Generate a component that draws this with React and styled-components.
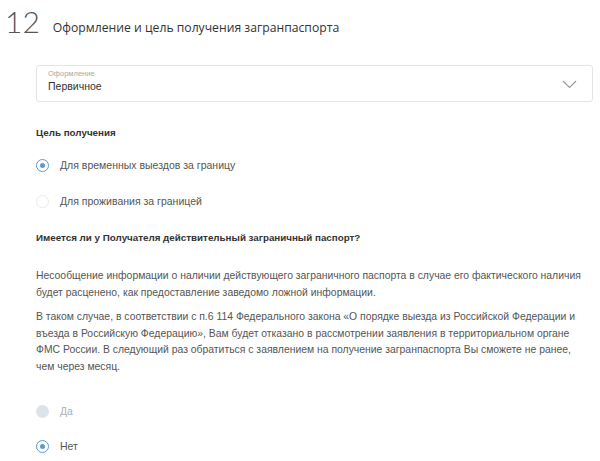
import React, { useState } from 'react';
import styled, { createGlobalStyle } from 'styled-components';

const GlobalStyle = createGlobalStyle`
  body {
    margin: 0;
    background: #fff;
    font-family: "Liberation Sans", Arial, sans-serif;
    color: #333;
  }
`;

const Page = styled.div`
  width: 600px;
  padding: 6px 7px 0 0;
  box-sizing: border-box;
`;

const Header = styled.div`
  display: flex;
  align-items: flex-start;
  gap: 13px;
  padding-left: 5px;
`;

const StepNumber = styled.div`
  font-family: "Lato", "Liberation Sans", sans-serif;
  font-weight: 300;
  font-size: 30px;
  line-height: 30px;
  color: #555;
`;

const Title = styled.h2`
  margin: 14px 0 0;
  font-family: "Open Sans", "Liberation Sans", sans-serif;
  font-weight: 400;
  font-size: 12.2px;
  line-height: 16px;
  color: #333;
`;

const Body = styled.div`
  padding-left: 36px;
  margin-top: 29px;
`;

const SelectBox = styled.div`
  position: relative;
  height: 37px;
  border: 1px solid #e4e4e4;
  border-radius: 3px;
  padding: 3px 11px 0;
  box-sizing: border-box;
  display: flex;
  flex-direction: column;
`;

const SelectLabel = styled.span`
  font-size: 7.5px;
  line-height: 9px;
  color: #a8a8a8;
`;

const SelectValue = styled.span`
  font-size: 10.5px;
  line-height: 14px;
  color: #333;
  margin-top: 1px;
`;

const Chevron = styled.svg`
  position: absolute;
  right: 15px;
  top: 14px;
`;

const SectionLabel = styled.div`
  font-size: 9.8px;
  font-weight: 700;
  line-height: 14px;
  color: #333;
  margin-top: ${(p) => p.$mt}px;
`;

const RadioList = styled.div`
  display: flex;
  flex-direction: column;
  gap: ${(p) => p.$gap}px;
  margin-top: ${(p) => p.$mt}px;
`;

const RadioRow = styled.label`
  display: flex;
  align-items: center;
  gap: 11px;
  height: 14px;
  font-size: 10.5px;
  color: ${(p) => (p.$disabled ? '#aab0b6' : '#555')};
  cursor: ${(p) => (p.$disabled ? 'default' : 'pointer')};
`;

const RadioCircle = styled.span`
  width: 13px;
  height: 13px;
  border-radius: 50%;
  box-sizing: border-box;
  flex-shrink: 0;
  display: flex;
  align-items: center;
  justify-content: center;
  border: ${(p) =>
    p.$disabled ? 'none' : p.$checked ? '1.5px solid #5d9ad2' : '1px solid #ebebeb'};
  background: ${(p) => (p.$disabled ? '#dde3ea' : '#fff')};

  &::after {
    content: '';
    display: ${(p) => (p.$checked ? 'block' : 'none')};
    width: 5px;
    height: 5px;
    border-radius: 50%;
    background: #5d9ad2;
  }
`;

const Paragraph = styled.p`
  margin: ${(p) => p.$mt}px 0 0;
  font-size: 10.4px;
  line-height: 16.5px;
  color: #555;
`;

function Radio({ label, checked, disabled, onSelect }) {
  return (
    <RadioRow $disabled={disabled} onClick={disabled ? undefined : onSelect}>
      <RadioCircle $checked={checked} $disabled={disabled} />
      {label}
    </RadioRow>
  );
}

export default function App() {
  const [purpose, setPurpose] = useState('temp');
  const [hasPassport, setHasPassport] = useState('no');

  return (
    <Page>
      <GlobalStyle />
      <Header>
        <StepNumber>12</StepNumber>
        <Title>Оформление и цель получения загранпаспорта</Title>
      </Header>
      <Body>
        <SelectBox>
          <SelectLabel>Оформление</SelectLabel>
          <SelectValue>Первичное</SelectValue>
          <Chevron width="15" height="9" viewBox="0 0 15 9">
            <path d="M1 1l6.5 6.5L14 1" fill="none" stroke="#9a9a9a" strokeWidth="1.2" />
          </Chevron>
        </SelectBox>

        <SectionLabel $mt={24}>Цель получения</SectionLabel>
        <RadioList $mt={18} $gap={22}>
          <Radio
            label="Для временных выездов за границу"
            checked={purpose === 'temp'}
            onSelect={() => setPurpose('temp')}
          />
          <Radio
            label="Для проживания за границей"
            checked={purpose === 'live'}
            onSelect={() => setPurpose('live')}
          />
        </RadioList>

        <SectionLabel $mt={23}>
          Имеется ли у Получателя действительный заграничный паспорт?
        </SectionLabel>

        <Paragraph $mt={23}>
          Несообщение информации о наличии действующего заграничного паспорта в случае его
          фактического наличия будет расценено, как предоставление заведомо ложной информации.
        </Paragraph>
        <Paragraph $mt={8}>
          В таком случае, в соответствии с п.6 114 Федерального закона «О порядке выезда из
          Российской Федерации и
          <br />
          въезда в Российскую Федерацию», Вам будет отказано в рассмотрении заявления в
          территориальном органе
          <br />
          ФМС России. В следующий раз обратиться с заявлением на получение загранпаспорта Вы
          сможете не ранее,
          <br />
          чем через месяц.
        </Paragraph>

        <RadioList $mt={29} $gap={21}>
          <Radio label="Да" checked={hasPassport === 'yes'} disabled />
          <Radio
            label="Нет"
            checked={hasPassport === 'no'}
            onSelect={() => setHasPassport('no')}
          />
        </RadioList>
      </Body>
    </Page>
  );
}
